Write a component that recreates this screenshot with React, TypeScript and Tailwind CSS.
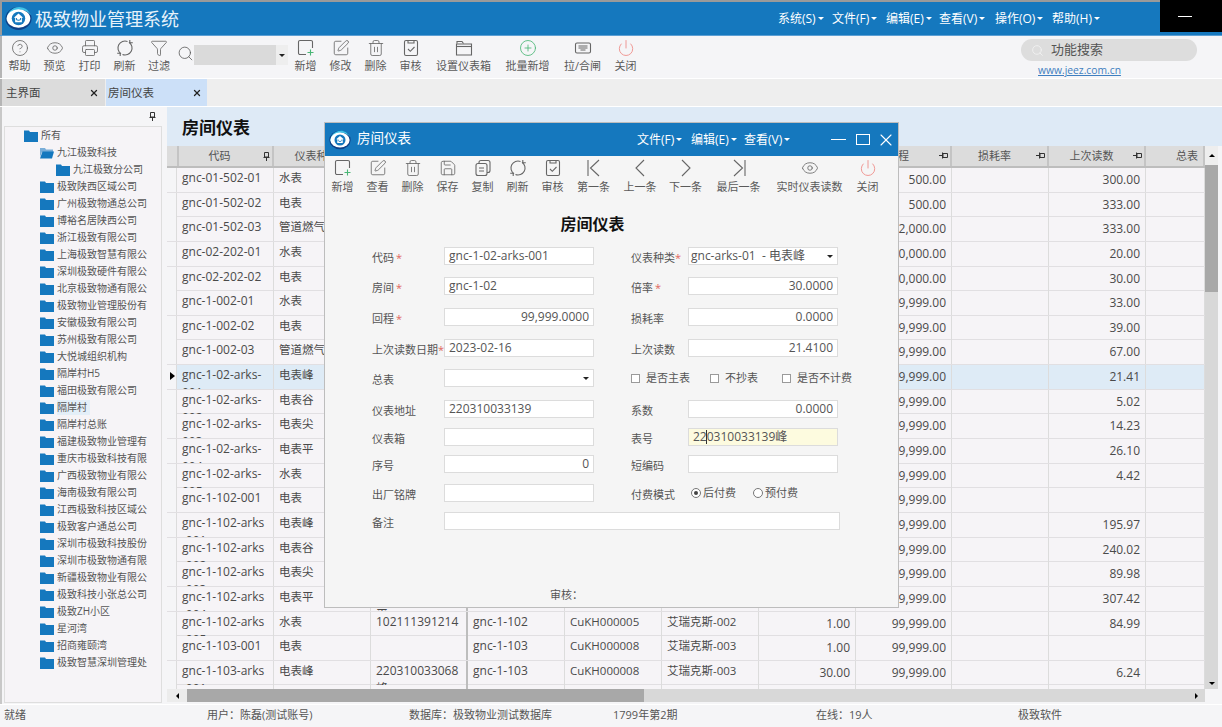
import { Eye, Printer, Funnel, CircleHelp, Trash2, SquarePen, CirclePlus, Power, Save, Search, X } from "lucide-react";
import type { ReactNode } from "react";

const FONT = { fontFamily: '"Open Sans","Noto Sans CJK SC",sans-serif' };

const Svg = ({ children }: { children: ReactNode }) => (
  <svg width="18" height="18" viewBox="0 0 18 18" fill="none" stroke="#666666" strokeWidth="1.1">
    {children}
  </svg>
);

const NewIcon = () => (
  <svg width="18" height="18" viewBox="0 0 18 18" fill="none" strokeWidth="1.1">
    <path d="M9 15.500H3a1.500 1.500 0 0 1-1.500-1.500V3A1.500 1.500 0 0 1 3 1.500h11A1.500 1.500 0 0 1 15.500 3v6" stroke="#666666" />
    <path d="M13.500 10.500v6M10.500 13.500h6" stroke="#49b675" />
  </svg>
);
const RefreshIcon = () => (
  <Svg>
    <path d="M11.500 2.500A7 7 0 0 0 5 14.800" />
    <path d="M6.500 15.500A7 7 0 0 0 13 3.200" />
    <path d="M13.800 1v2.800h3M4.200 17v-2.800h-3" />
  </Svg>
);
const AuditIcon = () => (
  <Svg>
    <rect x="2.500" y="1.500" width="13" height="15" rx="1.500" />
    <path d="M6 1.500v2.500h6V1.500M6 10l2.300 2.300L12.500 8" />
  </Svg>
);
const FolderOpenIcon = () => (
  <Svg>
    <path d="M2 4.500V2.500h5l1.500 2" />
    <path d="M1.500 5h15v11h-15z" />
    <path d="M2 7.500h14" />
  </Svg>
);
const SwitchIcon = () => (
  <Svg>
    <rect x="1.500" y="4" width="15" height="10" rx="1.500" />
    <path d="M4.500 7h9M4.500 9h9M6.500 11h5" />
  </Svg>
);
const CopyIcon = () => (
  <Svg>
    <rect x="2" y="4.500" width="11" height="12" rx="2" />
    <path d="M5 4.500V3.500a2 2 0 0 1 2-2h7a2 2 0 0 1 2 2v8a2 2 0 0 1-2 2h-1" />
    <path d="M5 9h5M5 12h5" />
  </Svg>
);
const FirstIcon = () => (
  <Svg>
    <path d="M3 1v16M14 1L5.500 9l8.500 8" />
  </Svg>
);
const PrevIcon = () => (
  <Svg>
    <path d="M13 1L5 9l8 8" />
  </Svg>
);
const NextIcon = () => (
  <Svg>
    <path d="M5 1l8 8-8 8" />
  </Svg>
);
const LastIcon = () => (
  <Svg>
    <path d="M15 1v16M4 1l8.500 8L4 17" />
  </Svg>
);

const Logo = ({ size }: { size: number }) => (
  <svg width={size} height={size} viewBox="0 0 32 32">
    <ellipse cx="16" cy="16" rx="15.500" ry="13.500" fill="#0d3f86" />
    <path d="M2 19C1 10 8 2.500 17 2.500c6 0 11 3.500 14 9.500-3-4-8-6.500-13-6.500C11 5.500 5 11 2 19z" fill="#3fc3e8" />
    <ellipse cx="16" cy="16" rx="14" ry="11" fill="#ffffff" />
    <circle cx="16" cy="16" r="8" fill="#1578be" />
    <path d="M16 10l5.500 5h-1.500v5.500h-8V15h-1.500z" fill="#ffffff" />
    <path d="M13.500 15.500v1.500c0 1.500 5 1.500 5 0v-1.500" fill="none" stroke="#1578be" strokeWidth="1.200" />
  </svg>
);

const FolderIcon = ({ open }: { open?: boolean }) => (
  <svg width="14" height="12" viewBox="0 0 14 12" className="shrink-0">
    {open ? (
      <>
        <path d="M0 1h5l1 1.500h7V5H2L0 10z" fill="#7aaed8" />
        <path d="M2.500 4.500H14L12 11.500H0z" fill="#1578be" />
      </>
    ) : (
      <path d="M0 .5h5l1 1.500h8v10H0z" fill="#1578be" />
    )}
  </svg>
);

const Caret = ({ className = "" }: { className?: string }) => (
  <span className={`inline-block h-0 w-0 border-x-[3px] border-t-[3px] border-x-transparent border-t-current ${className}`} />
);

const PinV = () => (
  <svg width="7" height="9" viewBox="0 0 7 9" fill="none" stroke="#333" strokeWidth="1">
    <path d="M1.500.5h4v4.500h-4zM.5 5.500h6M3.500 5.500V9" />
  </svg>
);
const PinH = () => (
  <svg width="9" height="7" viewBox="0 0 9 7" fill="none" stroke="#333" strokeWidth="1">
    <path d="M4 1.500h4.500v4H4zM3.500.5v6M3.500 3.500H0" />
  </svg>
);

type Tool = { label: string; w: number; icon: ReactNode };

const ic = { size: 18, strokeWidth: 1.1, color: "#666666" };

const mainLeft: Tool[] = [
  { label: "帮助", w: 35, icon: <CircleHelp {...ic} /> },
  { label: "预览", w: 35, icon: <Eye {...ic} /> },
  { label: "打印", w: 35, icon: <Printer {...ic} /> },
  { label: "刷新", w: 35, icon: <RefreshIcon /> },
  { label: "过滤", w: 34, icon: <Funnel {...ic} /> },
];
const mainRight: Tool[] = [
  { label: "新增", w: 35, icon: <NewIcon /> },
  { label: "修改", w: 35, icon: <SquarePen {...ic} /> },
  { label: "删除", w: 35, icon: <Trash2 {...ic} /> },
  { label: "审核", w: 35, icon: <AuditIcon /> },
  { label: "设置仪表箱", w: 71, icon: <FolderOpenIcon /> },
  { label: "批量新增", w: 57, icon: <CirclePlus size={18} strokeWidth={1.1} color="#49b675" /> },
  { label: "拉/合闸", w: 53, icon: <SwitchIcon /> },
  { label: "关闭", w: 33, icon: <Power size={18} strokeWidth={1.2} color="#ee8f8a" /> },
];
const modalTools: Tool[] = [
  { label: "新增", w: 35, icon: <NewIcon /> },
  { label: "查看", w: 35, icon: <SquarePen {...ic} /> },
  { label: "删除", w: 35, icon: <Trash2 {...ic} /> },
  { label: "保存", w: 35, icon: <Save {...ic} /> },
  { label: "复制", w: 35, icon: <CopyIcon /> },
  { label: "刷新", w: 35, icon: <RefreshIcon /> },
  { label: "审核", w: 35, icon: <AuditIcon /> },
  { label: "第一条", w: 47, icon: <FirstIcon /> },
  { label: "上一条", w: 46, icon: <PrevIcon /> },
  { label: "下一条", w: 45, icon: <NextIcon /> },
  { label: "最后一条", w: 61, icon: <LastIcon /> },
  { label: "实时仪表读数", w: 81, icon: <Eye {...ic} /> },
  { label: "关闭", w: 35, icon: <Power size={18} strokeWidth={1.2} color="#ee8f8a" /> },
];

function ToolButton({ tool, gap = "" }: { tool: Tool; gap?: string }) {
  return (
    <div className="flex shrink-0 flex-col items-center" style={{ width: tool.w }}>
      <div className="flex h-[20px] items-center justify-center">{tool.icon}</div>
      <div className={`text-[11px] leading-[16px] whitespace-nowrap text-[#5a5a5a] ${gap}`}>{tool.label}</div>
    </div>
  );
}

const tree: [number, string][] = [
  [0, "所有"], [1, "九江极致科技"], [2, "九江极致分公司"], [1, "极致陕西区域公司"], [1, "广州极致物通总公司"],
  [1, "博裕名居陕西公司"], [1, "浙江极致有限公司"], [1, "上海极致智慧有限公"], [1, "深圳极致硬件有限公"], [1, "北京极致物通有限公"],
  [1, "极致物业管理股份有"], [1, "安徽极致有限公司"], [1, "苏州极致有限公司"], [1, "大悦城组织机构"], [1, "隔岸村H5"],
  [1, "福田极致有限公司"], [1, "隔岸村"], [1, "隔岸村总账"], [1, "福建极致物业管理有"], [1, "重庆市极致科技有限"],
  [1, "广西极致物业有限公"], [1, "海南极致有限公司"], [1, "江西极致科技区域公"], [1, "极致客户通总公司"], [1, "深圳市极致科技股份"],
  [1, "深圳市极致物通有限"], [1, "新疆极致物业有限公"], [1, "极致科技小张总公司"], [1, "极致ZH小区"], [1, "星河湾"],
  [1, "招商雍颐湾"], [1, "极致智慧深圳管理处"],
];

const indent = ["pl-[19px]", "pl-[35px]", "pl-[51px]"];

const GRID_COLS = "grid grid-cols-[10px_97px_97px_97px_97px_97px_97px_97px_96px_97px_97px_59px]";

const headers = ["", "代码", "仪表种类", "仪表地址", "房间", "客户编码", "客户名称", "倍率", "回程", "损耗率", "上次读数", "总表"];

type Row = { code: string; type: string; addr?: string; room?: string; cust?: string; name?: string; rate?: string; back: string; last: string };

const rows: Row[] = [
  { code: "gnc-01-502-01", type: "水表", back: "500.00", last: "300.00" },
  { code: "gnc-01-502-02", type: "电表", back: "500.00", last: "333.00" },
  { code: "gnc-01-502-03", type: "管道燃气", back: "2,000.00", last: "333.00" },
  { code: "gnc-02-202-01", type: "水表", back: "10,000.00", last: "20.00" },
  { code: "gnc-02-202-02", type: "电表", back: "10,000.00", last: "30.00" },
  { code: "gnc-1-002-01", type: "水表", back: "99,999.00", last: "33.00" },
  { code: "gnc-1-002-02", type: "电表", back: "99,999.00", last: "39.00" },
  { code: "gnc-1-002-03", type: "管道燃气", back: "99,999.00", last: "67.00" },
  { code: "gnc-1-02-arks-\n001", type: "电表峰", back: "99,999.00", last: "21.41" },
  { code: "gnc-1-02-arks-\n002", type: "电表谷", back: "99,999.00", last: "5.02" },
  { code: "gnc-1-02-arks-\n003", type: "电表尖", back: "99,999.00", last: "14.23" },
  { code: "gnc-1-02-arks-\n004", type: "电表平", back: "99,999.00", last: "26.10" },
  { code: "gnc-1-02-arks-\n005", type: "水表", back: "99,999.00", last: "4.42" },
  { code: "gnc-1-102-001", type: "电表", back: "99,999.00", last: "" },
  { code: "gnc-1-102-arks\n-001", type: "电表峰", back: "99,999.00", last: "195.97" },
  { code: "gnc-1-102-arks\n-002", type: "电表谷", back: "99,999.00", last: "240.02" },
  { code: "gnc-1-102-arks\n-003", type: "电表尖", back: "99,999.00", last: "89.98" },
  { code: "gnc-1-102-arks\n-004", type: "电表平", addr: "220310033139\n平", back: "99,999.00", last: "307.42" },
  { code: "gnc-1-102-arks\n-005", type: "水表", addr: "102111391214", room: "gnc-1-102", cust: "CuKH000005", name: "艾瑞克斯-002", rate: "1.00", back: "99,999.00", last: "84.99" },
  { code: "gnc-1-103-001", type: "电表", room: "gnc-1-103", cust: "CuKH000008", name: "艾瑞克斯-003", rate: "1.00", back: "99,999.00", last: "" },
  { code: "gnc-1-103-arks\n-001", type: "电表峰", addr: "220310033068\n峰", room: "gnc-1-103", cust: "CuKH000008", name: "艾瑞克斯-003", rate: "30.00", back: "99,999.00", last: "6.24" },
  { code: "", type: "", back: "", last: "" },
];

function Cell({ text, right, thick, small }: { text?: string; right?: boolean; thick?: boolean; small?: boolean }) {
  return (
    <div
      className={`h-[24px] overflow-hidden whitespace-pre px-[5px] pt-[1px] leading-[18px] text-[#4a4a4a] ${
        small ? "text-[11.5px]" : "text-[12px]"
      } ${right ? "pt-[3px] text-right" : ""} ${thick ? "border-r-2 border-r-[#bdbdbd]" : "border-r border-r-[#dcdcdc]"}`}
    >
      {text}
    </div>
  );
}

function Label({ text, star, tight }: { text: string; star?: boolean; tight?: boolean }) {
  return (
    <div className="pt-[2px] text-[11px] leading-[18px] whitespace-nowrap text-[#555]">
      {text}
      {star && <span className={`text-[#e0665f] ${tight ? "" : "ml-[2px]"}`}>*</span>}
    </div>
  );
}

function Input({ value, right, select, yellow }: { value?: string; right?: boolean; select?: boolean; yellow?: boolean }) {
  return (
    <div
      className={`relative flex h-[18px] items-center border border-[#dcdcdc] text-[12px] text-[#555] ${
        yellow ? "bg-[#fdfbdf]" : "bg-white"
      } ${right ? "justify-end" : ""} ${select ? "px-[2px]" : "px-[4px]"}`}
    >
      <span className="whitespace-pre">{value}</span>
      {select && <Caret className="absolute right-[4px] top-[7px] text-[#222]" />}
    </div>
  );
}

const Check = ({ text, className }: { text: string; className: string }) => (
  <div className={`flex shrink-0 items-center text-[11px] leading-[18px] whitespace-nowrap text-[#555] ${className}`}>
    <span className="mr-[6px] h-[9px] w-[9px] border border-[#9a9a9a] bg-white" />
    {text}
  </div>
);

const Radio = ({ text, on, className }: { text: string; on?: boolean; className: string }) => (
  <div className={`flex items-center text-[11px] leading-[18px] whitespace-nowrap text-[#555] ${className}`}>
    <span className="mr-[2px] flex h-[10px] w-[10px] items-center justify-center rounded-full border border-[#777] bg-white">
      {on && <span className="h-[4px] w-[4px] rounded-full bg-[#444]" />}
    </span>
    {text}
  </div>
);

function RoomMeterDialog() {
  return (
    <div className="absolute left-[324px] top-[122px] h-[486px] w-[575px] border border-[#bdbdbd] bg-[#f5f5f5]">
      <div className="flex h-[33px] items-center bg-[#1578be] text-white">
        <div className="ml-[4px]">
          <Logo size={22} />
        </div>
        <div className="ml-[6px] -mt-[3px] text-[13.5px]">房间仪表</div>
        <div className="ml-[226px] flex items-center text-[12px]">
          <div className="flex w-[54px] items-center gap-[2px]">文件(F)<Caret /></div>
          <div className="flex w-[53px] items-center gap-[2px]">编辑(E)<Caret /></div>
          <div className="flex w-[87px] items-center gap-[2px]">查看(V)<Caret /></div>
          <span className="h-[1.500px] w-[15px] bg-white" />
          <span className="ml-[10px] h-[11px] w-[14px] border-[1.500px] border-white" />
          <X size={20} strokeWidth={1.3} className="ml-[6px]" />
        </div>
      </div>
      <div className="flex pt-[2px]">
        {modalTools.map((t) => (
          <ToolButton key={t.label} tool={t} gap="mt-[1px]" />
        ))}
      </div>
      <div className="mt-[18px] pr-[38px] text-center text-[16px] leading-[22px] font-bold text-[#111]">房间仪表</div>
      <div className="mt-[12px] grid grid-cols-[72px_150px_37px_57px_150px] grid-rows-[30px_31px_31px_30px_31px_28px_27px_29px_28px_18px] pl-[47px]">
        <Label text="代码" star /><Input value="gnc-1-02-arks-001" /><div /><Label text="仪表种类" star tight /><Input value="gnc-arks-01  - 电表峰" select />
        <Label text="房间" star /><Input value="gnc-1-02" /><div /><Label text="倍率" star /><Input value="30.0000" right />
        <Label text="回程" star /><Input value="99,999.0000" right /><div /><Label text="损耗率" /><Input value="0.0000" right />
        <Label text="上次读数日期" star tight /><Input value="2023-02-16" /><div /><Label text="上次读数" /><Input value="21.4100" right />
        <Label text="总表" /><Input select /><div />
        <div className="col-span-2 flex items-start">
          <Check text="是否主表" className="w-[79px]" />
          <Check text="不抄表" className="w-[72px]" />
          <Check text="是否不计费" className="w-[72px]" />
        </div>
        <Label text="仪表地址" /><Input value="220310033139" /><div /><Label text="系数" /><Input value="0.0000" right />
        <Label text="仪表箱" /><Input /><div /><Label text="表号" />
        <div className="relative">
          <Input value="220310033139峰" yellow />
          <span className="absolute left-[18px] top-[2px] h-[14px] w-px bg-[#333]" />
        </div>
        <Label text="序号" /><Input value="0" right /><div /><Label text="短编码" /><Input />
        <Label text="出厂铭牌" /><Input /><div /><Label text="付费模式" />
        <div className="flex items-start pl-[3px]">
          <Radio text="后付费" on className="w-[62px]" />
          <Radio text="预付费" className="w-[62px]" />
        </div>
        <Label text="备注" />
        <div className="col-span-4 w-[396px]"><Input /></div>
      </div>
      <div className="mt-[57px] pl-[225px] text-[11px] leading-[16px] text-[#555]">审核：</div>
    </div>
  );
}

export default function App() {
  return (
    <div className="relative h-[727px] w-[1222px] overflow-hidden bg-[#f5f5f7]" style={FONT}>
      {/* title bar */}
      <div className="h-[2px] bg-[#9a9a9a]" />
      <div className="flex h-[33px] items-center border-l-2 border-l-[#9a9a9a] bg-[#1578be] text-white">
        <div className="ml-[3px]">
          <Logo size={27} />
        </div>
        <div className="ml-[3px] text-[18px] leading-[24px] text-[#e8f2fa]">极致物业管理系统</div>
        <div className="ml-[599px] flex text-[12px]">
          {[["系统(S)", 54], ["文件(F)", 54], ["编辑(E)", 53], ["查看(V)", 56], ["操作(O)", 57], ["帮助(H)", 50]].map(([t, w]) => (
            <div key={t} className="flex items-center gap-[2px]" style={{ width: Number(w) }}>
              {t}
              <Caret />
            </div>
          ))}
        </div>
      </div>
      <div className="absolute right-0 top-0 flex h-[32px] w-[62px] items-center bg-black pl-[18px]">
        <span className="h-px w-[14px] bg-white" />
      </div>

      {/* main toolbar */}
      <div className="h-px bg-[#5c9fd4]" />
      <div className="relative flex h-[42px] items-start border-l-2 border-l-[#b5b5b5] pt-[2px]">
        {mainLeft.map((t) => (
          <ToolButton key={t.label} tool={t} />
        ))}
        <Search size={17} strokeWidth={1.1} color="#555" className="ml-[1px] mt-[7px]" />
        <div className="mt-[7px] flex h-[20px] w-[94px] shrink-0">
          <div className="flex-1 bg-[#dadada]" />
          <div className="flex w-[12px] items-center justify-center bg-[#eeeeee]">
            <Caret className="text-[#222]" />
          </div>
        </div>
        {mainRight.map((t) => (
          <ToolButton key={t.label} tool={t} />
        ))}
        <div className="absolute left-[1019px] top-[3px] flex h-[22px] w-[176px] items-center rounded-full bg-[#dddddd] pl-[10px] text-[13px] text-[#555]">
          <Search size={13} strokeWidth={1.4} color="#f5f5f5" />
          <span className="ml-[7px]">功能搜索</span>
        </div>
        <div className="absolute left-[1036px] top-[27px] text-[10.300px] leading-[14px] text-[#3f7fc0] underline">www.jeez.com.cn</div>
      </div>

      {/* tabs */}
      <div className="h-[1px] bg-white" />
      <div className="flex h-[27px] border-l-2 border-l-[#b5b5b5] bg-[#eeeeee] text-[11.500px] text-[#444]">
        <div className="flex w-[103px] items-center justify-between bg-[#dcdcdc] pl-[4px] pr-[6px]">
          主界面
          <X size={10} strokeWidth={3} color="#222" />
        </div>
        <div className="ml-px flex w-[101px] items-center justify-between bg-[#cce0f8] pl-[2px] pr-[5px]">
          房间仪表
          <X size={10} strokeWidth={3} color="#222" />
        </div>
      </div>
      <div className="h-[1px] bg-white" />

      {/* body */}
      <div className="flex h-[597px] border-l-2 border-l-[#c8c8c8]">
        <div className="w-[163px] shrink-0">
          <div className="flex h-[19px] items-center justify-end pr-[9px]">
            <PinV />
          </div>
          <div className="ml-[2px] h-[577px] w-[158px] overflow-hidden border border-[#dedede] bg-[#f6f4f7]">
            {tree.map(([lv, name], i) => (
              <div key={i} className={`flex h-[17px] items-center ${indent[lv]}`}>
                <FolderIcon open={i === 1} />
                <span
                  className={`ml-[3px] max-w-[91px] overflow-hidden text-[10px] leading-[15px] whitespace-nowrap text-[#555] ${
                    name === "隔岸村" ? "bg-[#e4eff8] pr-[3px]" : ""
                  }`}
                >
                  {name}
                </span>
              </div>
            ))}
          </div>
        </div>

        <div className="ml-[2px] flex min-w-0 flex-1 flex-col">
          <div className="flex h-[39px] items-center bg-[#deeaf6] pl-[15px] pt-[3px] text-[17px] font-bold text-[#111]">房间仪表</div>
          <div className="flex">
            <div className="w-[1038px] shrink-0">
              <div className={`${GRID_COLS} h-[22px] border-b-2 border-b-[#bdbdbd] bg-[#dcdcdc] text-[11px] text-[#555]`}>
                {headers.map((h, i) => (
                  <div
                    key={i}
                    className={`relative flex items-center border-r-2 border-r-[#c4c4c4] ${i === 11 ? "justify-end border-r-0 pr-[5px]" : "justify-center pr-[10px]"}`}
                  >
                    {h}
                    {i > 0 && i < 11 && (
                      <span className="absolute right-[2px] top-[6px]">{i === 1 ? <PinV /> : <PinH />}</span>
                    )}
                  </div>
                ))}
              </div>
              <div className="h-[521px] overflow-hidden">
                {rows.map((r, i) => (
                  <div
                    key={i}
                    className={`${GRID_COLS} h-[24.650px] border-b border-b-[#e1dfe2] ${i === 8 ? "bg-[#deebf6]" : "bg-[#f6f4f7]"}`}
                  >
                    <div className="relative h-[24px] border-r border-r-[#dcdcdc] bg-[#f5f5f7]">
                      {i === 8 && (
                        <span className="absolute left-[3px] top-[7px] h-0 w-0 border-y-[4px] border-l-[5px] border-y-transparent border-l-black" />
                      )}
                    </div>
                    <Cell text={r.code} />
                    <Cell text={r.type} small />
                    <Cell text={r.addr} thick />
                    <Cell text={r.room} />
                    <Cell text={r.cust} small />
                    <Cell text={r.name} small />
                    <Cell text={r.rate} right />
                    <Cell text={r.back} right />
                    <Cell />
                    <Cell text={r.last} right />
                    <Cell />
                  </div>
                ))}
              </div>
              <div className="flex h-[13px] items-center bg-[#d8d8d8]">
                <div className="flex h-full w-[20px] items-center justify-center bg-[#ececec]">
                  <span className="h-0 w-0 border-y-[3px] border-r-[3px] border-y-transparent border-r-black" />
                </div>
                <div className="h-full w-[457px] bg-[#a8a8a8]" />
                <span className="ml-auto mr-[7px] h-0 w-0 border-y-[3px] border-l-[3px] border-y-transparent border-l-black" />
              </div>
            </div>
            <div className="flex h-[543px] w-[13px] shrink-0 flex-col items-center bg-[#d8d8d8]">
              <div className="flex h-[19px] w-full items-center justify-center bg-[#eeeeee]">
                <span className="h-0 w-0 border-x-[3px] border-b-[3px] border-x-transparent border-b-black" />
              </div>
              <div className="h-[127px] w-full bg-[#a8a8a8]" />
              <span className="mb-[4px] mt-auto h-0 w-0 border-x-[3px] border-t-[3px] border-x-transparent border-t-black" />
            </div>
          </div>
        </div>
      </div>

      {/* status bar */}
      <div className="flex h-[22px] items-center border-t border-t-white pl-[4px] text-[11px] text-[#555]">
        <div className="w-[203px]">就绪</div>
        <div className="w-[202px]">用户：陈磊(测试账号)</div>
        <div className="w-[204px]">数据库：极致物业测试数据库</div>
        <div className="w-[203px]">1799年第2期</div>
        <div className="w-[202px]">在线：19人</div>
        <div>极致软件</div>
      </div>

      <RoomMeterDialog />
    </div>
  );
}
